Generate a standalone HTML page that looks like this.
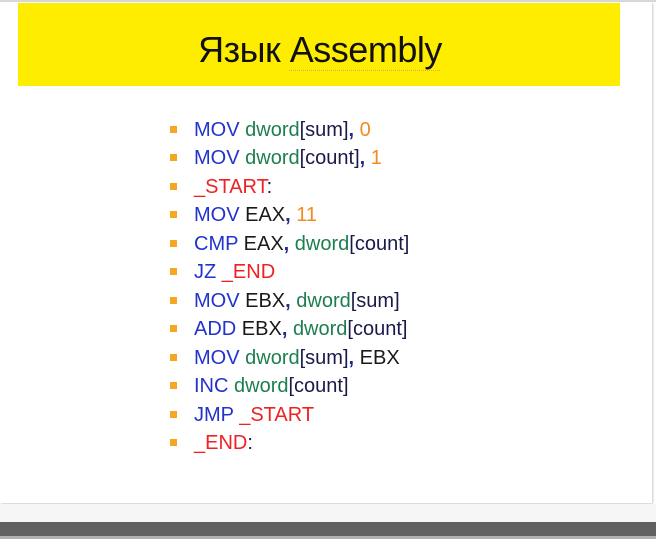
<!DOCTYPE html>
<html><head><meta charset="utf-8"><style>
body{margin:0;width:656px;height:539px;overflow:hidden;background:#fff;font-family:"Liberation Sans","DejaVu Sans",sans-serif;position:relative}
.top{position:absolute;left:0;top:0;width:656px;height:2px;background:#d8d8d8}
.slide{position:absolute;left:0;top:2px;width:652px;height:501px;background:#fff;box-shadow:1px 1px 2px #ccc}
.band{position:absolute;left:18px;top:3px;width:602px;height:83px;background:#ffed00}
.title{position:absolute;left:0;width:640px;top:29px;text-align:center;font-size:36px;color:#111;letter-spacing:-0.5px}
.title u{text-decoration:underline dotted #e0a060;text-decoration-thickness:1px;text-underline-offset:8px}
.l{position:absolute;left:194px;font-size:20px;height:22px;line-height:22px;white-space:nowrap;color:#1a1a1a}
.b{position:absolute;left:-24px;top:7px;width:7px;height:7px;background:#f5a623}
.k{color:#2233cc}.g{color:#1d7f50}.o{color:#f08c1e}.r{color:#ee2222}.n{color:#1a1a4a}.c{color:#1f2a8a;font-weight:bold}
.s1{position:absolute;left:0;top:504px;width:656px;height:18px;background:#f6f6f6;border-bottom:1px solid #e4e4e4}
.s2{position:absolute;left:0;top:522px;width:656px;height:14px;background:#606060}
.s3{position:absolute;left:0;top:536px;width:656px;height:3px;background:#b0b0b0}
</style></head><body>
<div class="top"></div>
<div class="slide"></div>
<div class="band"></div>
<div class="title">Язык <u>Assembly</u></div>
<div class="l" style="top:119px"><span class="b"></span><span class="k">MOV</span> <span class="g">dword</span><span class="n">[sum]</span><span class="c">,</span> <span class="o">0</span></div>
<div class="l" style="top:147px"><span class="b"></span><span class="k">MOV</span> <span class="g">dword</span><span class="n">[count]</span><span class="c">,</span> <span class="o">1</span></div>
<div class="l" style="top:176px"><span class="b"></span><span class="r">_START</span><span class="n">:</span></div>
<div class="l" style="top:204px"><span class="b"></span><span class="k">MOV</span> EAX<span class="c">,</span> <span class="o">11</span></div>
<div class="l" style="top:233px"><span class="b"></span><span class="k">CMP</span> EAX<span class="c">,</span> <span class="g">dword</span><span class="n">[count]</span></div>
<div class="l" style="top:261px"><span class="b"></span><span class="k">JZ</span> <span class="r">_END</span></div>
<div class="l" style="top:290px"><span class="b"></span><span class="k">MOV</span> EBX<span class="c">,</span> <span class="g">dword</span><span class="n">[sum]</span></div>
<div class="l" style="top:318px"><span class="b"></span><span class="k">ADD</span> EBX<span class="c">,</span> <span class="g">dword</span><span class="n">[count]</span></div>
<div class="l" style="top:347px"><span class="b"></span><span class="k">MOV</span> <span class="g">dword</span><span class="n">[sum]</span><span class="c">,</span> EBX</div>
<div class="l" style="top:375px"><span class="b"></span><span class="k">INC</span> <span class="g">dword</span><span class="n">[count]</span></div>
<div class="l" style="top:404px"><span class="b"></span><span class="k">JMP</span> <span class="r">_START</span></div>
<div class="l" style="top:432px"><span class="b"></span><span class="r">_END</span><span class="n">:</span></div>
<div class="s1"></div><div class="s2"></div><div class="s3"></div>
</body></html>
